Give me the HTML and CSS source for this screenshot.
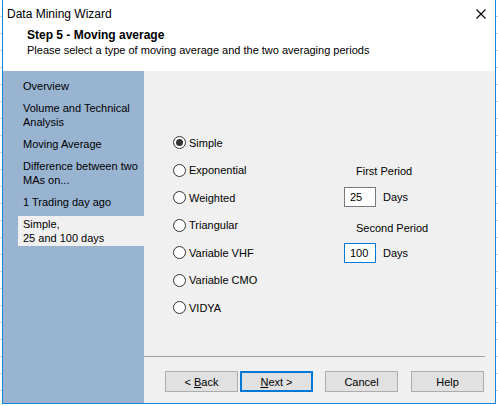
FILE: index.html
```html
<!DOCTYPE html>
<html>
<head>
<meta charset="utf-8">
<link rel="stylesheet" href="styles.css">
</head>
<body>
<div class="window">
  <div class="titlebar">
    <span class="title">Data Mining Wizard</span>
    <svg class="close" width="10" height="10" viewBox="0 0 10 10"><path d="M0.5 0.5 L9.5 9.5 M9.5 0.5 L0.5 9.5" stroke="#000" stroke-width="1.1" fill="none"/></svg>
  </div>
  <div class="header">
    <div class="step">Step 5 - Moving average</div>
    <div class="sub">Please select a type of moving average and the two averaging periods</div>
  </div>
  <div class="body">
    <div class="sidebar">
      <div class="item">Overview</div>
      <div class="item">Volume and Technical<br>Analysis</div>
      <div class="item">Moving Average</div>
      <div class="item">Difference between two<br>MAs on...</div>
      <div class="item">1 Trading day ago</div>
      <div class="item selected">Simple,<br>25 and 100 days</div>
    </div>
    <div class="content">
      <div class="main">
        <div class="radios">
          <div class="radio"><span class="dot checked"></span><span class="label">Simple</span></div>
          <div class="radio"><span class="dot"></span><span class="label">Exponential</span></div>
          <div class="radio"><span class="dot"></span><span class="label">Weighted</span></div>
          <div class="radio"><span class="dot"></span><span class="label">Triangular</span></div>
          <div class="radio"><span class="dot"></span><span class="label">Variable VHF</span></div>
          <div class="radio"><span class="dot"></span><span class="label">Variable CMO</span></div>
          <div class="radio"><span class="dot"></span><span class="label">VIDYA</span></div>
        </div>
        <div class="periods">
          <div class="plabel first">First Period</div>
          <div class="prow first"><div class="input">25</div><span class="days">Days</span></div>
          <div class="plabel second">Second Period</div>
          <div class="prow second"><div class="input focused">100</div><span class="days">Days</span></div>
        </div>
      </div>
      <div class="separator"></div>
      <div class="footer">
        <div class="btn"><span>&lt; <u>B</u>ack</span></div>
        <div class="btn default"><span><u>N</u>ext &gt;</span></div>
        <div class="btn cancel"><span>Cancel</span></div>
        <div class="btn help"><span>Help</span></div>
      </div>
    </div>
  </div>
</div>
</body>
</html>
```

FILE: styles.css
```css
html, body {
  margin: 0;
  padding: 0;
}
body {
  width: 498px;
  height: 406px;
  overflow: hidden;
  background-color: #ffffff;
  background-image: repeating-linear-gradient(to bottom, transparent 0, transparent 16px, #d0d0d0 16px, #d0d0d0 17px);
  font-family: "Liberation Sans", Arial, sans-serif;
  font-size: 11px;
  color: #000;
}
.window {
  box-sizing: border-box;
  margin: -1px 0 0 2px;
  width: 494px;
  height: 405px;
  border: 1px solid #1883d7;
  background: #fff;
  display: flex;
  flex-direction: column;
}
.titlebar {
  height: 27px;
  display: flex;
  align-items: center;
  justify-content: space-between;
  padding: 0 9px 0 4px;
  flex: none;
}
.title {
  font-size: 12px;
}
.close {
  display: block;
}
.header {
  box-sizing: border-box;
  height: 44px;
  padding: 1px 0 0 24px;
  flex: none;
}
.step {
  font-weight: bold;
  font-size: 12px;
  line-height: 15px;
}
.sub {
  line-height: 14px;
}
.body {
  flex: 1;
  display: flex;
  min-height: 0;
}
.sidebar {
  width: 141px;
  flex: none;
  background: #99b4d1;
  padding-top: 8px;
  box-sizing: border-box;
}
.item {
  line-height: 14px;
  padding-left: 20px;
  margin-bottom: 8px;
}
.item.selected {
  margin-top: -1px;
  margin-left: 15px;
  padding: 1px 0 1px 5px;
  background: #f0f0f0;
}
.content {
  flex: 1;
  background: #f0f0f0;
  display: flex;
  flex-direction: column;
}
.main {
  height: 285px;
  box-sizing: border-box;
  padding: 58px 0 0 29px;
  display: flex;
}
.radios {
  width: 171px;
  flex: none;
}
.radio {
  height: 27.5px;
  display: flex;
  align-items: center;
}
.dot {
  box-sizing: border-box;
  width: 13px;
  height: 13px;
  border: 1px solid #333;
  border-radius: 50%;
  background: #fff;
  position: relative;
  flex: none;
}
.dot.checked::after {
  content: "";
  position: absolute;
  left: 2px;
  top: 2px;
  width: 7px;
  height: 7px;
  border-radius: 50%;
  background: #333;
}
.label {
  margin-left: 3px;
}
.periods {
  padding-top: 35px;
}
.plabel {
  line-height: 14px;
  padding-left: 12px;
}
.plabel.second {
  margin-top: 14px;
}
.prow {
  display: flex;
  align-items: center;
  margin-top: 9px;
}
.prow.second {
  margin-top: 8px;
}
.input {
  box-sizing: border-box;
  width: 32px;
  height: 20px;
  border: 1px solid #7a7a7a;
  background: #fff;
  padding-left: 5px;
  line-height: 18px;
}
.input.focused {
  border-color: #0078d7;
}
.days {
  margin-left: 7px;
}
.separator {
  height: 1px;
  background: #a0a0a0;
  margin-right: 10px;
}
.footer {
  display: flex;
  padding: 14px 0 0 21px;
}
.btn {
  box-sizing: border-box;
  width: 73px;
  height: 21px;
  border: 1px solid #adadad;
  background: #e1e1e1;
  display: flex;
  align-items: center;
  justify-content: center;
  white-space: pre;
}
.btn.default {
  margin-left: 2px;
  border: 2px solid #0078d7;
}
.btn.cancel {
  margin-left: 12px;
}
.btn.help {
  margin-left: 13px;
}
```
